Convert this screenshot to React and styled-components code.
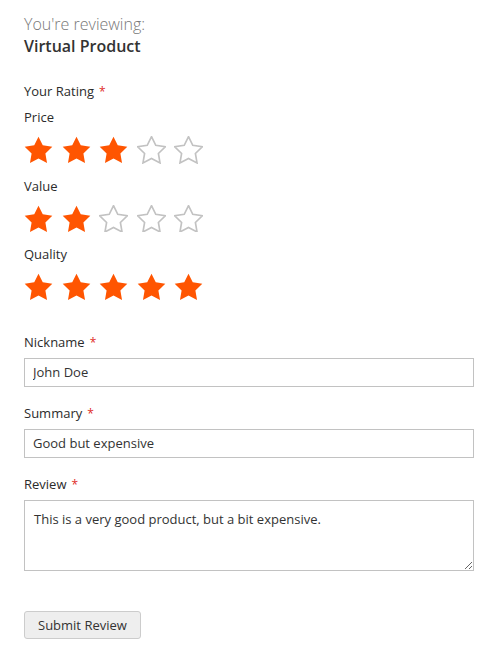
import React from 'react';
import styled, { createGlobalStyle } from 'styled-components';

const GlobalStyle = createGlobalStyle`
  body {
    margin: 0;
    background: #fff;
    font-family: 'Open Sans', 'Liberation Sans', sans-serif;
    color: #333;
  }
`;

const Page = styled.form`
  padding: 14px 21px 20px 24px;
  width: 450px;
`;

const Legend = styled.div`
  margin-bottom: 25px;
`;

const Reviewing = styled.div`
  font-size: 16px;
  font-weight: 300;
  color: #777;
  line-height: 21px;
`;

const ProductName = styled.div`
  font-size: 16px;
  font-weight: 600;
  color: #333;
  line-height: 22px;
`;

const Label = styled.div`
  font-size: 13px;
  font-weight: 500;
  line-height: 18px;
  color: #2b2b2b;
  margin-bottom: ${({ mb }) => mb ?? 6}px;

  &::after {
    content: ${({ required }) => (required ? "'*'" : "''")};
    color: #e02b27;
    font-size: 12px;
    margin-left: 5px;
  }
`;

const RatingGroup = styled.div`
  margin-bottom: 8px;
`;

const Stars = styled.div`
  display: flex;
  gap: 8.5px;
  margin-bottom: 13px;
`;

const Field = styled.div`
  margin-top: ${({ mt }) => mt ?? 0}px;
  margin-bottom: 17px;
`;

const Input = styled.input`
  box-sizing: border-box;
  width: 450px;
  height: 29px;
  border: 1px solid #c2c2c2;
  padding: 0 8px;
  font-family: inherit;
  font-size: 13px;
  color: #333;
  outline: none;
`;

const TextArea = styled.textarea`
  box-sizing: border-box;
  display: block;
  width: 450px;
  height: 71px;
  border: 1px solid #c2c2c2;
  padding: 9px 9px;
  font-family: inherit;
  font-size: 13px;
  color: #333;
  outline: none;
`;

const SubmitButton = styled.button`
  margin-top: 23px;
  height: 28px;
  padding: 0 13px;
  background: #eee;
  border: 1px solid #ccc;
  border-radius: 3px;
  font-family: inherit;
  font-size: 13px;
  font-weight: 500;
  color: #333;
`;

const STAR = '12,2 15.09,8.26 22,9.27 17,14.14 18.18,21.02 12,17.77 5.82,21.02 7,14.14 2,9.27 8.91,8.26';

const Star = ({ filled }) => (
  <svg width="29" height="27.6" viewBox="1.5 1.5 21 20">
    <polygon
      points={STAR}
      fill={filled ? '#ff5501' : 'none'}
      stroke={filled ? '#ff5501' : '#c2c2c2'}
      strokeWidth={filled ? 0 : 1.2}
      strokeLinejoin="miter"
    />
  </svg>
);

const ratings = [
  { name: 'Price', value: 3 },
  { name: 'Value', value: 2 },
  { name: 'Quality', value: 5 },
];

export default function App() {
  return (
    <>
      <GlobalStyle />
      <Page onSubmit={(e) => e.preventDefault()}>
        <Legend>
          <Reviewing>You're reviewing:</Reviewing>
          <ProductName>Virtual Product</ProductName>
        </Legend>
        <Label required mb={7}>Your Rating</Label>
        {ratings.map((r) => (
          <RatingGroup key={r.name}>
            <Label mb={9}>{r.name}</Label>
            <Stars>
              {[1, 2, 3, 4, 5].map((i) => (
                <Star key={i} filled={i <= r.value} />
              ))}
            </Stars>
          </RatingGroup>
        ))}
        <Field mt={32}>
          <Label required>Nickname</Label>
          <Input defaultValue="John Doe" />
        </Field>
        <Field>
          <Label required>Summary</Label>
          <Input defaultValue="Good but expensive" />
        </Field>
        <Field>
          <Label required>Review</Label>
          <TextArea defaultValue="This is a very good product, but a bit expensive." />
        </Field>
        <SubmitButton type="submit">Submit Review</SubmitButton>
      </Page>
    </>
  );
}
